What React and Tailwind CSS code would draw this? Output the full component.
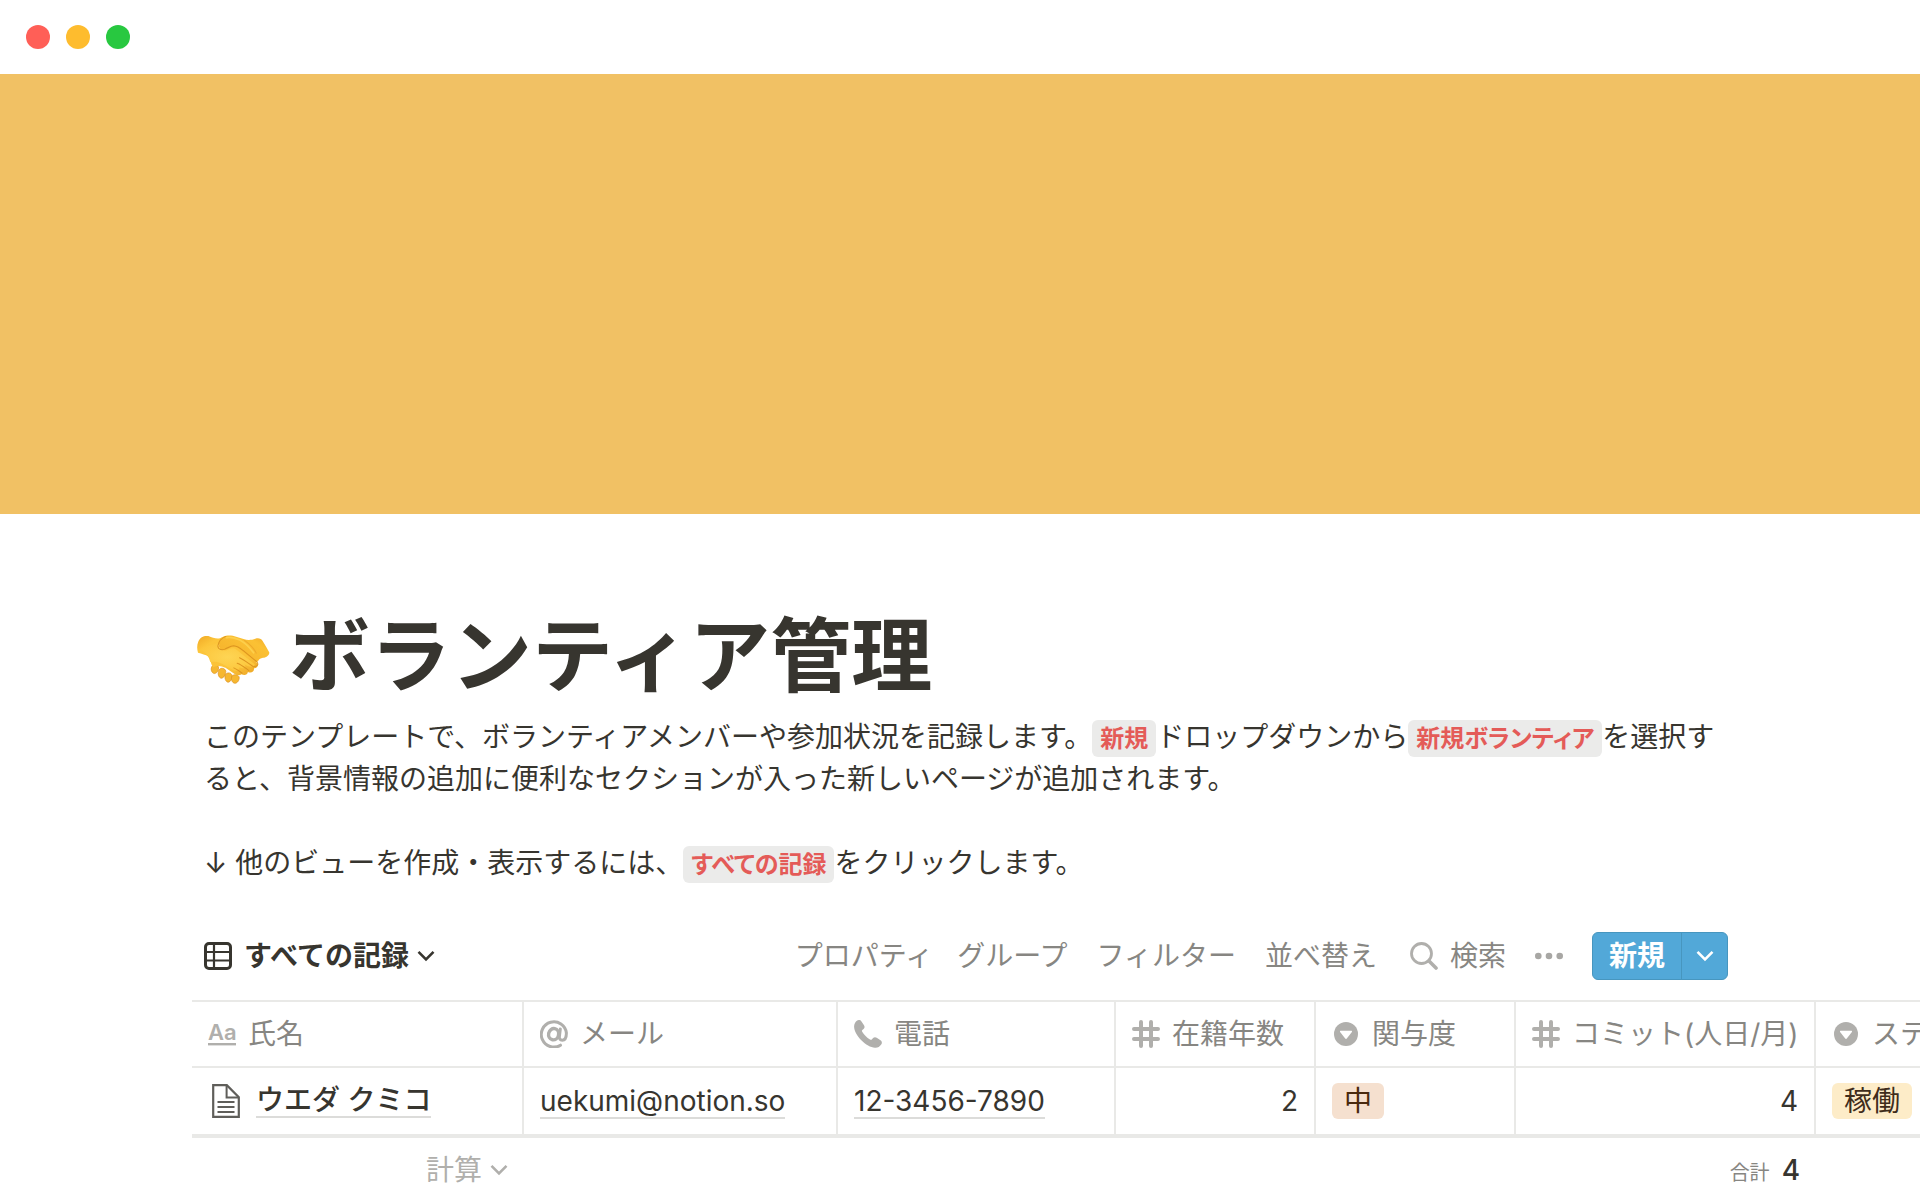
import React from 'react';

const columns = [
  { key: 'name', label: '氏名', icon: TitleIcon, col: 'w-[332px]' },
  { key: 'mail', label: 'メール', icon: AtIcon, col: 'w-[314px]' },
  { key: 'phone', label: '電話', icon: PhoneIcon, col: 'w-[278px]' },
  { key: 'years', label: '在籍年数', icon: HashIcon, col: 'w-[200px]' },
  { key: 'level', label: '関与度', icon: SelectIcon, col: 'w-[200px]' },
  { key: 'commit', label: 'コミット(人日/月)', icon: HashIcon, col: 'w-[300px]' },
  { key: 'status', label: 'ステータス', icon: SelectIcon, col: 'w-[240px]' },
];

const rows = [
  {
    name: 'ウエダ クミコ',
    mail: 'uekumi@notion.so',
    phone: '12-3456-7890',
    years: 2,
    level: '中',
    commit: 4,
    status: '稼働',
  },
];

function TitleIcon() {
  return (
    <svg viewBox="0 0 28 28" className="h-7 w-7 shrink-0" aria-hidden="true">
      <text x="0" y="20" fontSize="22" fontWeight="600" fontFamily="Inter, sans-serif" fill="currentColor">Aa</text>
      <rect x="0" y="23" width="28" height="2.400" fill="currentColor" />
    </svg>
  );
}

function AtIcon() {
  return (
    <svg viewBox="0 0 28 28" className="h-7 w-7 shrink-0" fill="none" stroke="currentColor" strokeLinecap="round" aria-hidden="true">
      <path d="M20.500 25.200A12.600 12.600 0 1 1 26.400 13c0 4.800-1.600 7.200-4.200 7.200-2.200 0-3-1.500-2.800-3.700l.9-7.500" strokeWidth="3" />
      <ellipse cx="13.600" cy="14.200" rx="5" ry="5.700" strokeWidth="3.400" transform="rotate(12 13.600 14.200)" />
    </svg>
  );
}

function PhoneIcon() {
  return (
    <svg viewBox="0 0 28 28" className="h-7 w-7 shrink-0" fill="currentColor" aria-hidden="true">
      <path d="M3.200.6C4.600-.4 6.300-.2 7.300 1.200l2.700 4c.9 1.400.7 2.700-.4 3.700L8.300 10c-.5.500-.5 1-.1 1.700 1.900 3 4.600 5.800 7.800 7.800.7.400 1.300.4 1.800-.1l1.300-1.400c1-1 2.300-1.200 3.600-.3l3.800 2.600c1.500 1 1.800 2.800.7 4.200-1.500 2.100-3.500 3.500-6.200 3.300C12.500 27.300-.2 15 .1 6.200.2 3.800 1.400 1.900 3.200.6Z" />
    </svg>
  );
}

function HashIcon() {
  return (
    <svg viewBox="0 0 28 28" className="h-7 w-7 shrink-0" fill="none" stroke="currentColor" strokeWidth="4" strokeLinecap="round" aria-hidden="true">
      <path d="M9 2v24M19 2v24M2 9h24M2 19h24" />
    </svg>
  );
}

function SelectIcon() {
  return (
    <svg viewBox="0 0 28 28" className="h-7 w-7 shrink-0" aria-hidden="true">
      <circle cx="14" cy="14" r="12" fill="currentColor" />
      <path d="M8.800 10.800h10.400c.8 0 1.100.7.7 1.300l-5.100 6.500c-.4.500-1.200.5-1.600 0l-5.100-6.500c-.4-.6-.1-1.300.7-1.300Z" fill="#fff" />
    </svg>
  );
}

function ChevronIcon({ className }) {
  return (
    <svg viewBox="0 0 18 12" className={className} fill="none" stroke="currentColor" strokeWidth="2.600" aria-hidden="true">
      <path d="M1.500 1.800 9 9.300l7.500-7.500" />
    </svg>
  );
}

function TableIcon() {
  return (
    <svg viewBox="0 0 28 28" className="h-7 w-7 shrink-0" fill="none" stroke="currentColor" aria-hidden="true">
      <rect x="1.500" y="1.500" width="25" height="25" rx="3.500" strokeWidth="3" />
      <path d="M1 10h26M1 18.500h26M10 1v26" strokeWidth="2.200" />
    </svg>
  );
}

function SearchIcon() {
  return (
    <svg viewBox="0 0 28 28" className="h-7 w-7 shrink-0 text-[#b0afac]" fill="none" stroke="currentColor" strokeLinecap="round" aria-hidden="true">
      <circle cx="11.500" cy="11.500" r="10" strokeWidth="2.800" />
      <path d="m19 19 7 7" strokeWidth="3.600" />
    </svg>
  );
}

function PageIcon() {
  return (
    <svg viewBox="0 0 28 34" className="h-[34px] w-7 shrink-0 text-[#5f5e5a]" fill="none" stroke="currentColor" aria-hidden="true">
      <path d="M1.200 1.200h13.600l12 12v19.600H1.200Z" strokeWidth="2.200" />
      <path d="M14.600 1.200v12.200h12.200" strokeWidth="2" />
      <path d="M5.500 18h17M5.500 23h17M5.500 28h17" strokeWidth="2.200" />
    </svg>
  );
}

function Handshake() {
  return (
    <svg viewBox="50 135 224 155" className="h-[52px] w-[75px] shrink-0" role="img" aria-label="握手">
      <defs>
        <linearGradient id="handLeft" x1="0" y1="0" x2="1" y2="1">
          <stop offset="0" stopColor="#f0a824" />
          <stop offset=".2" stopColor="#fcc53a" />
          <stop offset=".7" stopColor="#fbc238" />
          <stop offset="1" stopColor="#eba325" />
        </linearGradient>
        <linearGradient id="handRight" x1="1" y1="0" x2="0" y2="1">
          <stop offset="0" stopColor="#f0a626" />
          <stop offset=".25" stopColor="#fbc134" />
          <stop offset="1" stopColor="#f3ad28" />
        </linearGradient>
        <radialGradient id="palm" cx=".5" cy=".5" r=".6">
          <stop offset="0" stopColor="#fed554" />
          <stop offset="1" stopColor="#fcc53a" />
        </radialGradient>
      </defs>
      {/* lower fingers */}
      <g fill="#f6b730" stroke="#dc9020" strokeWidth="2">
        <path d="M97 236c4-8 16-8 20 0 2 9-4 19-12 20-8-1-12-12-8-20Z" />
        <path d="M118 246c5-9 19-7 21 3 0 10-6 21-14 21-8-2-11-15-7-24Z" />
        <path d="M138 259c5-8 18-6 20 3 0 9-4 19-12 20-8-1-12-14-8-23Z" />
        <path d="M158 263c6-6 19-4 21 4 1 8-5 18-13 18-9-1-13-14-8-22Z" />
      </g>
      {/* right hand */}
      <path d="M118 158c8-14 24-18 42-15l32 10c12 4 25 3 35-1 9-3 18-1 22 7 7 11 14 23 20 34 0 8-8 15-19 16-7 1-11 4-15 10l-28 21-78-52c-8-3-12-10-10-18Z" fill="url(#handRight)" />
      {/* left hand */}
      <path d="M57 160c6-14 18-18 30-16 11 5 21 8 32 7l20-7c-11 6-19 15-22 25-5 12 2 18 14 18 12-1 18-8 27-11 11-3 20 4 28 12l44 34c8 8 4 19-7 18 2 10-8 16-18 11-1 8-10 12-19 7-7 6-17 3-24-3l-24-16c-12-7-25-8-37-2-7-8-7-22-14-31-8-7-20-8-31-12-3-11-4-22 1-34Z" fill="url(#handLeft)" />
      <path d="M84 174c18-7 30-10 34-7-2 14 9 23 24 19 11-5 20-9 28-2l56 45c-8 12-22 5-31-1 7 9-2 17-15 9-1 9-10 14-19 8-15-7-28-17-43-22-13-4-19-1-26-2-2-17-14-27-28-36Z" fill="url(#palm)" />
      <g fill="none" stroke="#dc9420" strokeWidth="3" strokeLinecap="round" strokeLinejoin="round">
        <path d="M139 145c-12 5-21 14-23 26-3 12 9 16 20 12 10-4 16-10 27-10 13 1 21 9 31 17l37 30c7 7 3 16-7 15" />
        <path d="M180 209c15 7 28 18 42 27M173 225c14 5 24 14 35 22M163 239c9 4 16 9 25 16" />
        <path d="M195 157c14 10 27 22 35 38" stroke="#eda92c" />
      </g>
      <path d="M141 149c14-4 25 0 40 7 18 10 30 23 41 38" fill="none" stroke="#fdcf4c" strokeWidth="5" strokeLinecap="round" />
    </svg>
  );
}

function Code({ children }) {
  return (
    <code className="rounded-md bg-[#ebebea] px-2 py-1 font-[Inter,'Noto_Sans_CJK_JP',sans-serif] text-2xl leading-none font-semibold text-[#e45b58] [font-feature-settings:'palt']">
      {children}
    </code>
  );
}

const tagStyles = {
  中: 'bg-[#f5e0cf] text-[#49290e]',
  稼働: 'bg-[#fdecc8] text-[#402c1b]',
};

function Tag({ children }) {
  return (
    <span className={`inline-block rounded-md px-3 leading-9 whitespace-nowrap ${tagStyles[children]}`}>{children}</span>
  );
}

const underline = 'inline-block border-b-2 border-[#dcdcda] leading-8';

function Cell({ type, value }) {
  if (type === 'name') {
    return (
      <div className="flex items-center gap-4 pl-1">
        <PageIcon />
        <a href="#page" className={`${underline} font-medium`}>{value}</a>
      </div>
    );
  }
  if (type === 'mail') return <a href={`mailto:${value}`} className={underline}>{value}</a>;
  if (type === 'phone') return <a href={`tel:${value}`} className={underline}>{value}</a>;
  if (type === 'level' || type === 'status') return <Tag>{value}</Tag>;
  return <div className="text-right">{value}</div>;
}

export default function App() {
  return (
    <div lang="ja" className="min-h-screen w-full overflow-hidden bg-white font-[Inter,'Noto_Sans_CJK_JP',sans-serif] text-[28px] leading-[42px] text-[#37352f]">
      {/* Window bar */}
      <div className="flex h-[74px] items-center gap-4 px-[26px]">
        <span className="h-6 w-6 rounded-full bg-[#ff5f57]" />
        <span className="h-6 w-6 rounded-full bg-[#febc2e]" />
        <span className="h-6 w-6 rounded-full bg-[#28c840]" />
      </div>

      {/* Cover */}
      <div className="h-[440px] bg-[#f1c164]" />

      <main className="pt-[94px] pl-48">
        <div className="pr-48">
          <h1 className="flex items-baseline gap-[18px] pl-1 text-[81px] leading-[96px] font-bold">
            <Handshake />
            ボランティア管理
          </h1>

          <div className="mt-3 px-3">
            <p>
              このテンプレートで、ボランティアメンバーや参加状況を記録します。<Code>新規</Code>ドロップダウンから<Code>新規ボランティア</Code>を選択すると、背景情報の追加に便利なセクションが入った新しいページが追加されます。
            </p>
            <p className="mt-[42px]">
              ↓ 他のビューを作成・表示するには、<Code>すべての記録</Code>をクリックします。
            </p>
          </div>

          {/* View toolbar */}
          <div className="mt-12 flex h-12 items-center justify-between whitespace-nowrap">
            <button type="button" className="flex items-center gap-3 pl-3 font-semibold">
              <TableIcon />
              <span>すべての記録</span>
              <ChevronIcon className="-ml-1 h-3 w-[18px]" />
            </button>

            <div className="flex items-center gap-[29px] text-[#878682]">
              <div className="flex items-center gap-6">
                <button type="button">プロパティ</button>
                <button type="button">グループ</button>
              </div>
              <button type="button">フィルター</button>
              <button type="button">並べ替え</button>
              <button type="button" className="ml-1 flex items-center gap-3">
                <SearchIcon />
                検索
              </button>
              <button type="button" aria-label="その他">
                <svg viewBox="0 0 28 28" className="h-7 w-7 text-[#a8a7a4]" fill="currentColor" aria-hidden="true">
                  <circle cx="3.300" cy="14" r="3.300" />
                  <circle cx="14" cy="14" r="3.300" />
                  <circle cx="24.700" cy="14" r="3.300" />
                </svg>
              </button>
              <div className="flex h-12 overflow-hidden rounded-md border border-[#4796bf] bg-[#52a8d8] text-white">
                <button type="button" className="border-r border-[#4796bf] px-4 font-semibold">新規</button>
                <button type="button" aria-label="テンプレート" className="flex w-[45px] items-center justify-center">
                  <ChevronIcon className="h-3 w-[18px]" />
                </button>
              </div>
            </div>
          </div>
        </div>

        {/* Database table */}
        <div className="mt-5 overflow-hidden">
          <table className="w-[1864px] table-fixed border-separate border-spacing-0">
            <colgroup>
              {columns.map((c) => (
                <col key={c.key} className={c.col} />
              ))}
            </colgroup>
            <thead>
              <tr>
                {columns.map(({ key, label, icon: Icon }) => (
                  <th key={key} className="h-[68px] border-y-2 border-r-2 border-[#e9e9e7] px-4 py-0 text-left font-normal whitespace-nowrap text-[#878682]">
                    <div className="flex items-center gap-3">
                      <span className="text-[#b0afac]"><Icon /></span>
                      {label}
                    </div>
                  </th>
                ))}
              </tr>
            </thead>
            <tbody>
              {rows.map((row) => (
                <tr key={row.mail}>
                  {columns.map((c) => (
                    <td key={c.key} className="h-[70px] border-r-2 border-b-4 border-[#e9e9e7] px-4 py-0">
                      <Cell type={c.key} value={row[c.key]} />
                    </td>
                  ))}
                </tr>
              ))}
            </tbody>
            <tfoot>
              <tr>
                <td className="h-16 px-4 py-0">
                  <button type="button" className="ml-auto flex items-center gap-2 text-[#b0afac]">
                    計算
                    <ChevronIcon className="h-3 w-[18px]" />
                  </button>
                </td>
                <td colSpan={4} />
                <td className="px-4 py-0 text-right">
                  <span className="mr-3 text-xl text-[#878682]">合計</span>
                  <span className="font-medium">4</span>
                </td>
                <td />
              </tr>
            </tfoot>
          </table>
        </div>
      </main>
    </div>
  );
}
